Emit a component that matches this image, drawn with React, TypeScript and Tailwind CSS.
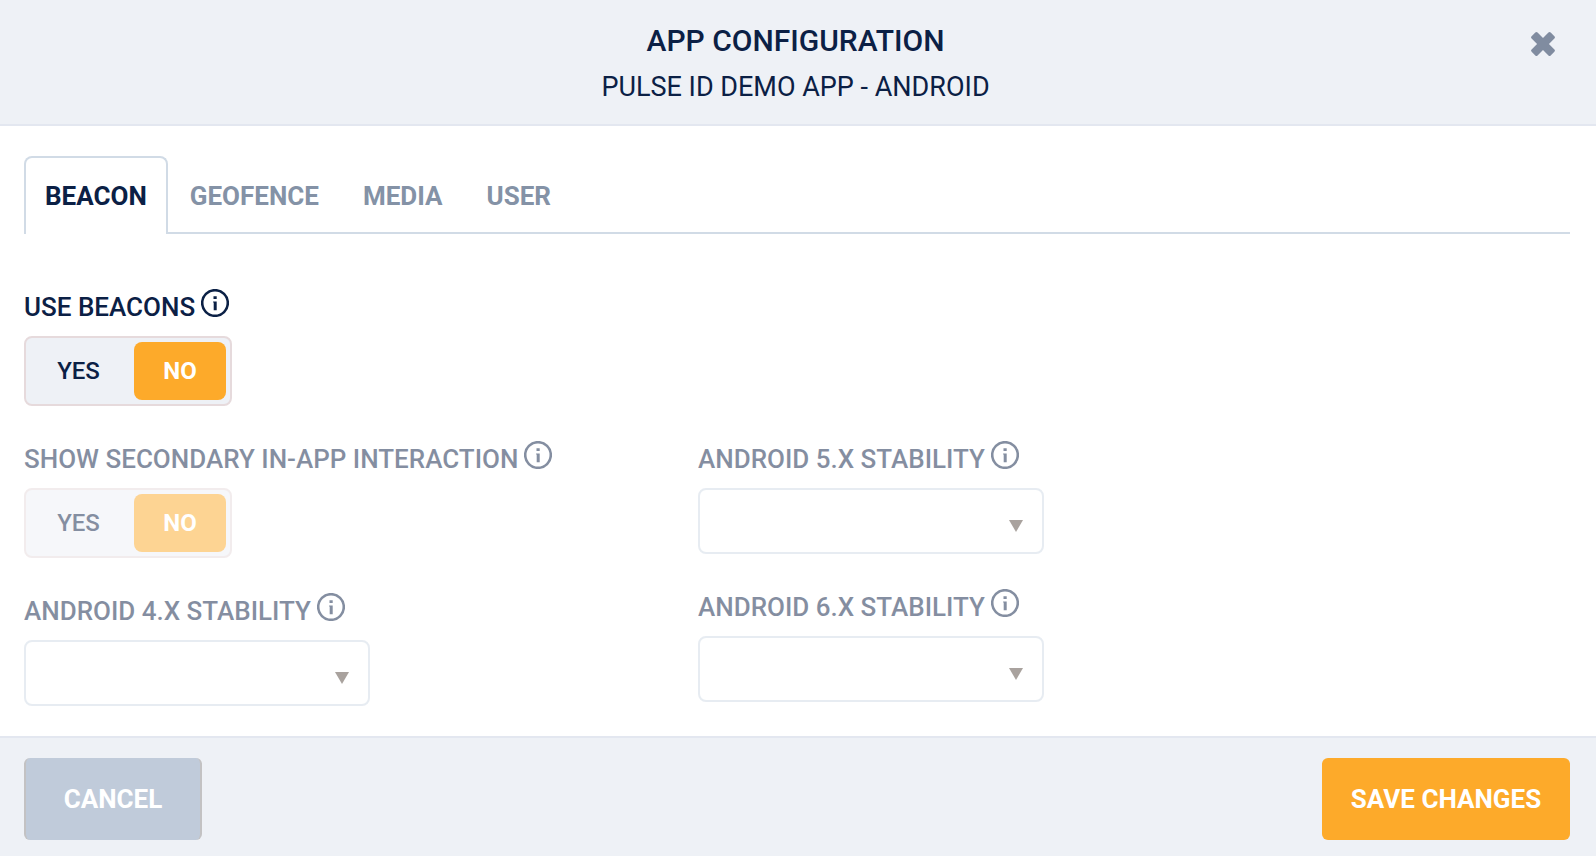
import { useState } from 'react'

type ToggleValue = 'yes' | 'no'

const TABS = ['Beacon', 'Geofence', 'Media', 'User']

function InfoButton({ about }: { about: string }) {
  return (
    <button type="button" aria-label={`About ${about}`} className="size-7 shrink-0">
      <svg viewBox="0 0 28 28" className="size-7" fill="none" aria-hidden="true">
        <circle cx="14" cy="14" r="12.8" stroke="currentColor" strokeWidth="2.6" />
        <path d="M12.5 7.2h3.2v2.8h-3.2zM12.1 12.4h3.6v8.8h-3v-7.6h-.6z" fill="currentColor" />
      </svg>
    </button>
  )
}

function Toggle({ name, label, disabled = false }: { name: string; label: string; disabled?: boolean }) {
  const [value, setValue] = useState<ToggleValue>('no')

  return (
    <fieldset disabled={disabled} aria-label={label} className="disabled:opacity-50">
      <div className="flex items-start gap-1.5">
        <span className="text-[26px] leading-9 font-medium uppercase">{label}</span>
        <InfoButton about={label} />
      </div>
      <div className="mt-[11px] grid h-[70px] w-52 grid-cols-[1fr_92px] gap-[7px] rounded-lg border-2 border-[#e6dadc] bg-[#eef1f6] p-1">
        {(['yes', 'no'] as const).map((option) => (
          <label
            key={option}
            className="flex items-center justify-center rounded-lg text-2xl font-medium uppercase has-checked:bg-[#fdaa2a] has-checked:font-bold has-checked:text-white"
          >
            <input
              type="radio"
              name={name}
              value={option}
              checked={value === option}
              onChange={() => setValue(option)}
              className="sr-only"
            />
            {option}
          </label>
        ))}
      </div>
    </fieldset>
  )
}

function StabilitySelect({ id, label }: { id: string; label: string }) {
  return (
    <div className="opacity-50">
      <div className="flex items-start gap-1.5">
        <label htmlFor={id} className="text-[26px] leading-9 font-medium uppercase">
          {label}
        </label>
        <InfoButton about={label} />
      </div>
      <div className="relative mt-[11px] w-[346px]">
        <select
          id={id}
          disabled
          className="block h-[66px] w-full appearance-none rounded-lg border-2 border-[#d1dbe6] bg-white px-5 text-2xl"
        />
        <svg
          viewBox="0 0 14 12"
          className="pointer-events-none absolute right-[21px] bottom-[22px] h-3 w-3.5 fill-[#55483f]"
          aria-hidden="true"
        >
          <path d="M0 0h14L7 12z" />
        </svg>
      </div>
    </div>
  )
}

export default function App() {
  const [activeTab, setActiveTab] = useState('Beacon')

  return (
    <div className="flex min-h-screen flex-col bg-white font-[Roboto,sans-serif] text-[#0b2045]">
      <header className="grid grid-cols-[1fr_auto_1fr] border-b-2 border-[#e3e7f0] bg-[#eef1f6] pt-[21px] pr-[41px] pb-[17px] pl-9">
        <div className="col-start-2 text-center uppercase">
          <h1 className="text-[30px] leading-10 font-medium">App Configuration</h1>
          <p className="mt-1.5 text-[27px] leading-10">Pulse ID Demo App - Android</p>
        </div>
        <button type="button" aria-label="Close" className="mt-[11px] size-6 justify-self-end text-[#808ca0]">
          <svg viewBox="0 0 24 24" className="size-6" fill="currentColor" aria-hidden="true">
            <g transform="rotate(45 12 12)">
              <rect x="-1.5" y="7.8" width="27" height="8.4" rx="1.6" />
              <rect x="7.8" y="-1.5" width="8.4" height="27" rx="1.6" />
            </g>
          </svg>
        </button>
      </header>

      <main className="flex-1 pt-[30px] pr-[26px] pb-[30px] pl-6">
        <div role="tablist" className="flex h-[78px]">
          {TABS.map((tab) => (
            <button
              key={tab}
              type="button"
              role="tab"
              aria-selected={activeTab === tab}
              onClick={() => setActiveTab(tab)}
              className="rounded-t-lg border-b-2 border-[#d1dbe6] px-[22px] pt-1 text-[26px] font-bold text-[#8492a6] uppercase aria-selected:border-x-2 aria-selected:border-t-2 aria-selected:border-b-0 aria-selected:px-[19px] aria-selected:pt-0 aria-selected:text-[#0b2045]"
            >
              {tab}
            </button>
          ))}
          <div className="flex-1 border-b-2 border-[#d1dbe6]" />
        </div>

        <div className="mt-[55px]">
          <Toggle name="use-beacons" label="Use Beacons" />
        </div>
        <div className="mt-[35px] grid grid-cols-[674fr_872fr]">
          <div className="space-y-[35px]">
            <Toggle name="secondary-interaction" label="Show Secondary In-App Interaction" disabled />
            <StabilitySelect id="android-4" label="Android 4.X Stability" />
          </div>
          <div className="space-y-[35px]">
            <StabilitySelect id="android-5" label="Android 5.X Stability" />
            <StabilitySelect id="android-6" label="Android 6.X Stability" />
          </div>
        </div>
      </main>

      <footer className="flex justify-between border-t-2 border-[#e3e7f0] bg-[#eef1f6] pt-5 pr-[26px] pb-4 pl-6">
        <button
          type="button"
          className="h-[82px] w-[178px] rounded-md border-x-2 border-[#c3c2c3] bg-[#c0cbda] text-[26px] font-bold text-white uppercase"
        >
          Cancel
        </button>
        <button
          type="button"
          className="h-[82px] w-[248px] rounded-md bg-[#fdaa2a] text-[26px] font-bold text-white uppercase"
        >
          Save Changes
        </button>
      </footer>
    </div>
  )
}
